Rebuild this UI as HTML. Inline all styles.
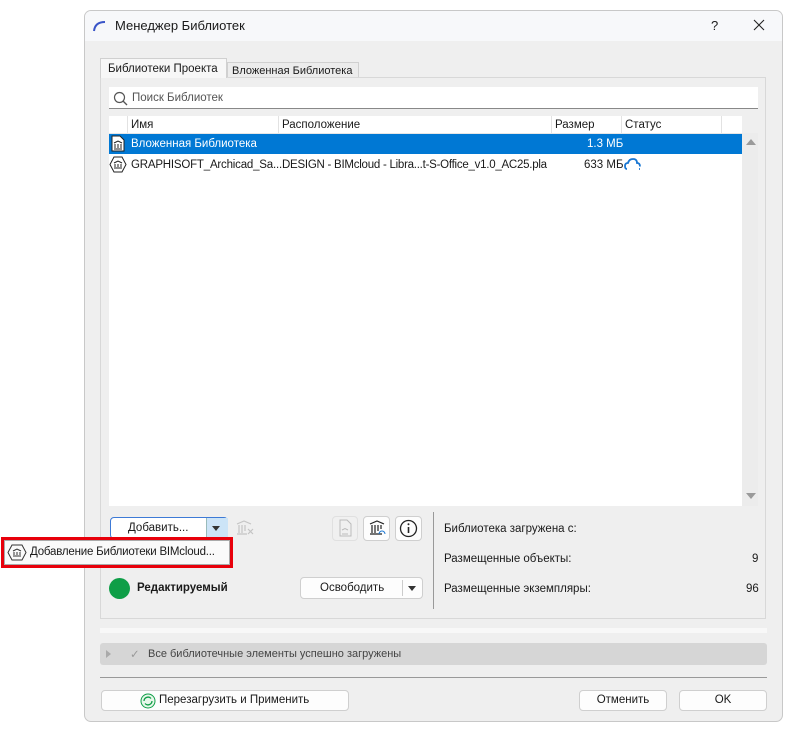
<!DOCTYPE html><html><head><meta charset="utf-8"><style>
body{margin:0;width:795px;height:733px;background:#fff;font-family:"Liberation Sans",sans-serif;font-size:11.5px;color:#1a1a1a;position:relative;overflow:hidden}
.a{position:absolute;white-space:nowrap}
.btn{position:absolute;background:#fdfdfd;border:1px solid #cfcfcf;border-radius:4px;box-sizing:border-box;text-align:center}
</style></head><body>
<div class="a" style="left:84px;top:10px;width:699px;height:712px;background:#efefef;border:1px solid #c8c8c8;border-radius:7px;box-sizing:border-box;overflow:hidden">
<div class="a" style="left:0;top:0;right:0;height:30px;background:#f7f8fa"></div>
</div>
<svg class="a" style="left:92px;top:19px" width="16" height="14"><path d="M2 12 Q3 3 13 3" stroke="#3a55c8" stroke-width="2" fill="none"/></svg>
<div class="a" style="left:115px;top:18px;font-size:13px">Менеджер Библиотек</div>
<div class="a" style="left:711px;top:18px;font-size:13px">?</div>
<svg class="a" style="left:753px;top:19px" width="12" height="12"><path d="M1 1l10 10M11 1L1 11" stroke="#222" stroke-width="1.1"/></svg>
<!-- tabs -->
<div class="a" style="left:100px;top:58px;width:127px;height:20px;background:#f7f7f7;border:1px solid #d0d0d0;border-bottom:none;font-size:11.5px;line-height:20px;text-indent:7px;z-index:2;box-sizing:border-box">Библиотеки Проекта</div>
<div class="a" style="left:227px;top:62px;width:132px;height:16px;background:#ececec;border:1px solid #d0d0d0;border-bottom:none;font-size:11px;line-height:16px;text-indent:4px;box-sizing:border-box">Вложенная Библиотека</div>
<div class="a" style="left:100px;top:77px;width:666px;height:542px;border:1px solid #d8d8d8;box-sizing:border-box;background:#efefef"></div>
<!-- search -->
<div class="a" style="left:109px;top:87px;width:649px;height:22px;background:#fff;border-bottom:1px solid #888;box-sizing:border-box"></div>
<svg class="a" style="left:113px;top:91px" width="15" height="15"><circle cx="6.5" cy="6.5" r="5" stroke="#555" fill="none" stroke-width="1.2"/><path d="M10 10l4 4" stroke="#555" stroke-width="1.3"/></svg>
<div class="a" style="left:132px;top:92px;color:#555">Поиск Библиотек</div>
<!-- list -->
<div class="a" style="left:109px;top:116px;width:633px;height:390px;background:#fff"></div>
<div class="a" style="left:742px;top:133px;width:16px;height:373px;background:#ececec"></div>
<div class="a" style="left:746px;top:139px;width:0;height:0;border:5px solid transparent;border-bottom:6px solid #9a9a9a;border-top:none"></div>
<div class="a" style="left:746px;top:493px;width:0;height:0;border:5px solid transparent;border-top:6px solid #9a9a9a;border-bottom:none"></div>
<div class="a" style="left:109px;top:116px;width:633px;height:17px;border-bottom:1px solid #e6e6e6"></div>
<div class="a" style="left:127px;top:116px;width:1px;height:17px;background:#e2e2e2"></div>
<div class="a" style="left:278px;top:116px;width:1px;height:17px;background:#e2e2e2"></div>
<div class="a" style="left:551px;top:116px;width:1px;height:17px;background:#e2e2e2"></div>
<div class="a" style="left:621px;top:116px;width:1px;height:17px;background:#e2e2e2"></div>
<div class="a" style="left:721px;top:116px;width:1px;height:17px;background:#e2e2e2"></div>
<div class="a" style="left:131px;top:119px">Имя</div>
<div class="a" style="left:282px;top:119px">Расположение</div>
<div class="a" style="left:555px;top:119px">Размер</div>
<div class="a" style="left:625px;top:119px">Статус</div>
<div class="a" style="left:109px;top:134px;width:633px;height:20px;background:#0078d4"></div>
<svg class="a" style="left:111px;top:135px" width="14" height="17"><path d="M1 1h8l4 4v11H1z" fill="#fff" stroke="#222"/><path d="M3 8l4-2 4 2M3 14h8M4 9v4M7 9v4M10 9v4" stroke="#222" fill="none"/></svg>
<div class="a" style="left:131px;top:138px;color:#fff">Вложенная Библиотека</div>
<div class="a" style="left:587px;top:138px;color:#fff">1.3 МБ</div>
<svg class="a" style="left:109px;top:156px" width="18" height="17"><path d="M5 1h8l4 7.5-4 7.5H5L1 8.5z" fill="none" stroke="#222"/><path d="M5 7l4-2 4 2M5 12h8M6 8v3M9 8v3M12 8v3" stroke="#222" fill="none"/></svg>
<div class="a" style="left:131px;top:159px;letter-spacing:-0.2px">GRAPHISOFT_Archicad_Sa...</div>
<div class="a" style="left:282px;top:159px;letter-spacing:-0.25px">DESIGN - BIMcloud - Libra...t-S-Office_v1.0_AC25.pla</div>
<div class="a" style="left:584px;top:159px">633 МБ</div>
<svg class="a" style="left:624px;top:157px" width="17" height="14"><path d="M3 12 Q1 12 1 9 Q1 6 4 6 Q5 2 9 2 Q13 2 13 6 Q16 6 16 9.5" stroke="#1976d2" stroke-width="1.8" fill="none"/><path d="M15 12h1" stroke="#1976d2" stroke-width="1.8"/></svg>
<!-- buttons row -->
<div class="btn" style="left:110px;top:517px;width:118px;height:22px;border-color:#3d7ad6;background:#fff"></div>
<div class="a" style="left:128px;top:522px">Добавить...</div>
<div class="a" style="left:206px;top:518px;width:21px;height:20px;background:#cce4f7;border-left:1px solid #9bb"></div>
<div class="a" style="left:212px;top:526px;border:4px solid transparent;border-top:5px solid #333;border-bottom:none"></div>
<svg class="a" style="left:235px;top:519px" width="20" height="18"><path d="M2 5l7-3 7 3M2 15h10M4 6v8M7 6v8M10 6v6M13 10l5 5M18 10l-5 5" stroke="#c4c4c4" fill="none" stroke-width="1.2"/></svg>
<div class="btn" style="left:332px;top:516px;width:26px;height:25px;background:#f0f0f0;border-color:#e0e0e0"></div>
<svg class="a" style="left:337px;top:519px" width="16" height="18"><path d="M3 1h7l4 4v12H3z" fill="none" stroke="#bbb"/><path d="M5 11l3-1.5 3 1.5M5 15h6" stroke="#bbb" fill="none"/></svg>
<div class="btn" style="left:363px;top:516px;width:27px;height:25px"></div>
<svg class="a" style="left:368px;top:519px" width="18" height="18"><path d="M2 5l7-3 7 3M2 15h12M4 6v8M7 6v8M10 6v6M13 6v4" stroke="#222" fill="none" stroke-width="1.2"/><path d="M11 15a3 3 0 0 1 6 0" stroke="#1976d2" fill="none"/></svg>
<div class="btn" style="left:395px;top:516px;width:27px;height:25px"></div>
<svg class="a" style="left:399px;top:519px" width="19" height="19"><circle cx="9.5" cy="9.5" r="8" stroke="#222" fill="none" stroke-width="1.3"/><path d="M9.5 8v6" stroke="#222" stroke-width="1.6"/><circle cx="9.5" cy="5.3" r="1" fill="#222"/></svg>
<!-- popup -->
<div class="a" style="left:1px;top:537px;width:232px;height:31px;border:3px solid #e8000b;box-sizing:border-box;background:#f4f4f4"></div>
<div class="a" style="left:4px;top:540px;width:226px;height:25px;border:1px solid #aaa;box-sizing:border-box;background:#fafafa"></div>
<svg class="a" style="left:7px;top:544px" width="20" height="17"><path d="M5 1h10l4 7.5-4 7.5H5L1 8.5z" fill="none" stroke="#333"/><path d="M6 7l4-2 4 2M6 12h8M7 8v3M10 8v3M13 8v3" stroke="#333" fill="none"/></svg>
<div class="a" style="left:30px;top:546px;letter-spacing:-0.2px">Добавление Библиотеки BIMcloud...</div>
<!-- status -->
<div class="a" style="left:109px;top:578px;width:21px;height:21px;border-radius:50%;background:#0e9e47"></div>
<div class="a" style="left:137px;top:582px;font-weight:bold">Редактируемый</div>
<div class="btn" style="left:300px;top:577px;width:123px;height:22px"></div>
<div class="a" style="left:320px;top:582px">Освободить</div>
<div class="a" style="left:402px;top:580px;width:1px;height:16px;background:#ccc"></div>
<div class="a" style="left:408px;top:586px;border:4px solid transparent;border-top:5px solid #333;border-bottom:none"></div>
<div class="a" style="left:433px;top:512px;width:1px;height:97px;background:#999"></div>
<div class="a" style="left:444px;top:523px">Библиотека загружена с:</div>
<div class="a" style="left:444px;top:553px">Размещенные объекты:</div>
<div class="a" style="left:752px;top:553px">9</div>
<div class="a" style="left:444px;top:583px">Размещенные экземпляры:</div>
<div class="a" style="left:746px;top:583px">96</div>
<!-- bottom -->
<div class="a" style="left:100px;top:628px;width:667px;height:5px;background:#f8f8f8"></div>
<div class="a" style="left:100px;top:643px;width:667px;height:22px;background:#d6d6d6;border-radius:3px"></div>
<div class="a" style="left:106px;top:650px;border:4px solid transparent;border-left:5px solid #aaa;border-right:none"></div>
<div class="a" style="left:130px;top:647px;color:#999">✓</div>
<div class="a" style="left:148px;top:648px;color:#444;font-size:11px">Все библиотечные элементы успешно загружены</div>
<div class="a" style="left:100px;top:677px;width:667px;height:1px;background:#999"></div>
<div class="btn" style="left:101px;top:690px;width:248px;height:21px"></div>
<svg class="a" style="left:140px;top:693px" width="16" height="16"><circle cx="8" cy="8" r="7" fill="#e8f7ea" stroke="#0e9e47"/><path d="M4 8a4 4 0 0 1 7-2.5M12 8a4 4 0 0 1-7 2.5" stroke="#0e9e47" fill="none" stroke-width="1.3"/></svg>
<div class="a" style="left:159px;top:694px">Перезагрузить и Применить</div>
<div class="btn" style="left:579px;top:690px;width:88px;height:21px;line-height:19px">Отменить</div>
<div class="btn" style="left:679px;top:690px;width:88px;height:21px;line-height:19px">OK</div>
</body></html>
